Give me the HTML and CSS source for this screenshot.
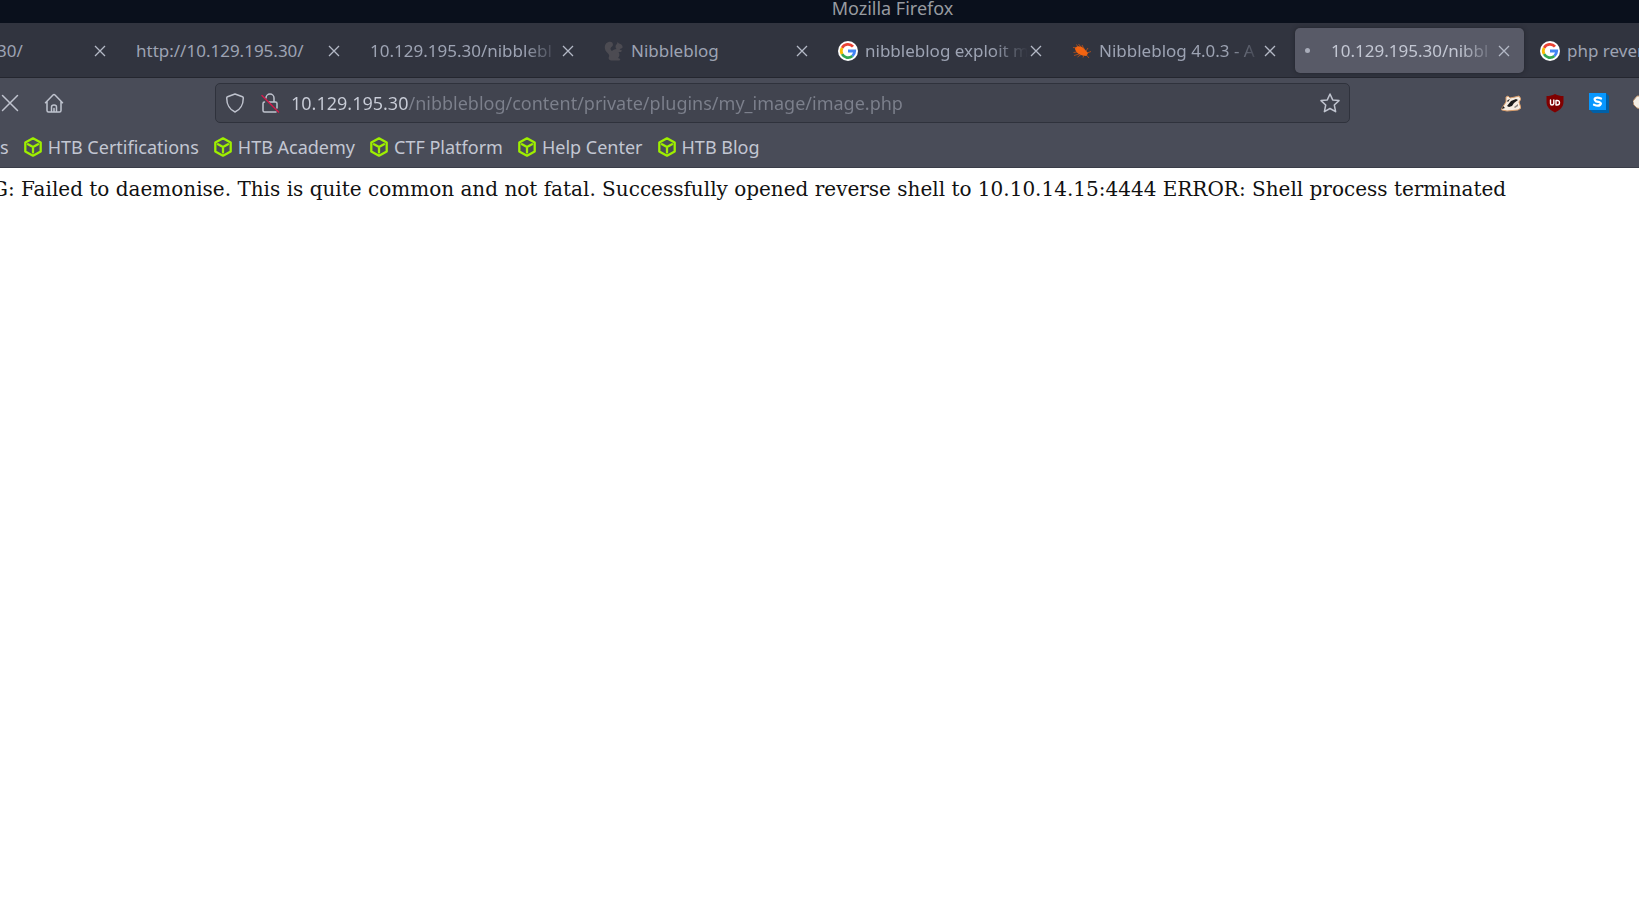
FILE: index.html
```html
<!DOCTYPE html>
<html lang="en">
<head>
<meta charset="utf-8">
<title>Mozilla Firefox</title>
<link rel="stylesheet" href="styles.css">
</head>
<body>
<svg class="defs" width="0" height="0" aria-hidden="true">
  <symbol id="close" viewBox="0 0 12 12"><path d="M1 1l10 10M11 1L1 11" fill="none" stroke="currentColor" stroke-width="1.3"/></symbol>
  <symbol id="google" viewBox="0 0 20 20">
    <circle cx="10" cy="10" r="10" fill="#fff"/>
    <g fill="none" stroke-width="2.8">
      <path d="M15 5.6A6.7 6.7 0 0 0 4.1 6.8" stroke="#ea4335"/>
      <path d="M4.1 6.8A6.7 6.7 0 0 0 4.1 13.2" stroke="#fbbc05"/>
      <path d="M4.1 13.2A6.7 6.7 0 0 0 14.4 15" stroke="#34a853"/>
      <path d="M14.4 15A6.7 6.7 0 0 0 16.7 10H10" stroke="#4285f4"/>
    </g>
  </symbol>
  <symbol id="cube" viewBox="0 0 18 20"><path d="M9 1.3L16.7 5.6V14.4L9 18.7L1.3 14.4V5.6ZM4 7.2L9 10L14 7.2M9 10V15.5" fill="none" stroke="#9fef00" stroke-width="2.3" stroke-linejoin="round" stroke-linecap="round"/></symbol>
</svg>
<header class="browser">
  <div class="titlebar">Mozilla Firefox</div>
  <nav class="tabs" aria-label="Tabs">
    <div class="tab tab-cut"><span class="tab-label">30/</span><button class="tab-close" aria-label="Close tab"><svg><use href="#close"/></svg></button></div>
    <div class="tab"><span class="tab-label">http://10.129.195.30/</span><button class="tab-close" aria-label="Close tab"><svg><use href="#close"/></svg></button></div>
    <div class="tab"><span class="tab-label fade">10.129.195.30/nibblebl</span><button class="tab-close" aria-label="Close tab"><svg><use href="#close"/></svg></button></div>
    <div class="tab">
      <svg class="favicon" viewBox="0 0 20 20" fill="#4c4b52"><path d="M7 19.500C4 19 4.500 16.500 5 15.500C6 13.500 3 12 1.500 9.500C-.5 5 2 .8 6 .8C9.500 1 9.800 4.500 7.400 6C5.800 7.500 6.500 9 8 10C9 8.500 10.500 8.500 12.500 8C11 6.500 11.300 4 13 3L13.500 1L15 2.500C17.500 3 19 5 18.500 6.500C18 7.700 16 7.500 15.500 8.500L18 9.500L17 11L14.500 11C16 13 15.500 15.500 14 17L16.500 18L15.500 19.500Z"/></svg>
      <span class="tab-label">Nibbleblog</span><button class="tab-close" aria-label="Close tab"><svg><use href="#close"/></svg></button></div>
    <div class="tab"><svg class="favicon"><use href="#google"/></svg><span class="tab-label fade">nibbleblog exploit m</span><button class="tab-close" aria-label="Close tab"><svg><use href="#close"/></svg></button></div>
    <div class="tab">
      <svg class="favicon" viewBox="0 0 20 20"><path d="M3 7C5 4.500 9 5 12 7.500L16 12L14.500 15C9 15 3 12 3 7Z" fill="#f26411"/><path d="M1 6.500L5 7M6 6L4.500 3.500M9 6L6.500 3M12 8L10 4M14 10L16 7M15 12L19 10.500M5 11L1.500 11.500M7 13L2 14.500M9 13.500L5.500 16M12 14L11 16.500M14 13.500L17 17" fill="none" stroke="#d65913" stroke-width="1" opacity=".7"/></svg>
      <span class="tab-label fade">Nibbleblog 4.0.3 - A</span><button class="tab-close" aria-label="Close tab"><svg><use href="#close"/></svg></button></div>
    <div class="tab active"><span class="throbber"></span><span class="tab-label fade">10.129.195.30/nibbl</span><button class="tab-close" aria-label="Close tab"><svg><use href="#close"/></svg></button></div>
    <div class="tab tab-last"><svg class="favicon"><use href="#google"/></svg><span class="tab-label">php rever</span></div>
  </nav>
  <div class="toolbar">
    <div class="nav-buttons">
      <button class="icon-button" aria-label="Stop"><svg width="20" height="20" viewBox="0 0 20 20"><path d="M2.500 2.500L17.500 17.500M17.500 2.500L2.500 17.500"/></svg></button>
      <button class="icon-button" aria-label="Home"><svg width="20" height="20" viewBox="0 0 20 20"><path d="M1.500 9.800L9 2Q10 1 11 2L18.500 9.800M3 8.500V17.500Q3 19 4.500 19H15.500Q17 19 17 17.500V8.500M7.500 19V14Q7.500 12 10 12T12.500 14V19M10 15.500V19"/></svg></button>
    </div>
    <div class="urlbar">
      <svg width="20" height="20" viewBox="0 0 20 20" aria-hidden="true"><path d="M10 1L17.500 3.800Q18.300 4.100 18.300 5C18.300 11.500 15 17 10 19C5 17 1.700 11.500 1.700 5Q1.700 4.100 2.500 3.800Z"/></svg>
      <svg width="20" height="20" viewBox="0 0 20 20" aria-hidden="true"><path d="M6 5a4 4 0 0 1 8 0V9M9 9H15.500Q17 9 17 10.500V15M16 19H4.500Q3 19 3 17.500V10.500Q3 9 4.500 9"/><path class="slash" d="M2 2.500L18.500 19"/></svg>
      <input class="url" type="text" aria-label="Address" value="10.129.195.30/nibbleblog/content/private/plugins/my_image/image.php">
      <button class="icon-button" aria-label="Bookmark this page"><svg width="20" height="20" viewBox="0 0 20 20"><path d="M10 1L12.700 6.900L19 7.600L14.300 12L15.600 18.700L10 15.500L4.400 18.700L5.700 12L1 7.600L7.300 6.900Z"/></svg></button>
    </div>
    <div class="extensions">
      <button class="ext" aria-label="Privacy Badger"><svg viewBox="0 0 20 20"><path d="M1 15L5 9L5 4L7 3L9 5L14 4L18 3L20 6L18 9L20 15L17 17L6 18L1 17Z" fill="#f6ece1" stroke="#d59a68" stroke-width="1"/><path d="M1 16L2 13L4 15ZM6 13L10 8L15 6L17 7L13 10L11 13L8 14ZM6 8L7 7L9 6L7 9Z" fill="#1b1b1b"/><path d="M13 14L17 11L17 13L14 15Z" fill="#8a8580"/></svg></button>
      <button class="ext" aria-label="uBlock Origin"><svg viewBox="0 0 20 20"><path d="M10 1C13 2.500 15 3 18.500 3V9C18.500 14 15 17 10 19.500C5 17 1.500 14 1.500 9V3C5 3 7 2.500 10 1Z" fill="#800000"/><path d="M5.500 7V10.500Q5.500 12 7 12T8.800 10.500V7M11 7.500V12H12Q14.500 12 14.500 9.700T12 7.500Z" fill="none" stroke="#fff" stroke-width="1.400"/></svg></button>
      <button class="ext" aria-label="Extension"><svg viewBox="0 0 20 20"><path d="M1 17L4 20H20V3L17 0Z" fill="#0060a8"/><path d="M0 0H17V17H0Z" fill="#0797ff"/><path d="M12 5.500Q8.500 4 6.500 5T7 8.300L10.500 9.200Q13 10.500 11 12T5 11.700" fill="none" stroke="#fff" stroke-width="2.300"/></svg></button>
      <button class="ext" aria-label="Extension"><svg viewBox="0 0 20 20"><path d="M0 8L4 3L12 3L19 9L12 17L4 15L1 12Z" fill="#f3eee5" stroke="#b8906c" stroke-width="1"/></svg></button>
    </div>
  </div>
  <nav class="bookmarks" aria-label="Bookmarks">
    <a href="#">s</a>
    <a href="#"><svg><use href="#cube"/></svg>HTB Certifications</a>
    <a href="#"><svg><use href="#cube"/></svg>HTB Academy</a>
    <a href="#"><svg><use href="#cube"/></svg>CTF Platform</a>
    <a href="#"><svg><use href="#cube"/></svg>Help Center</a>
    <a href="#"><svg><use href="#cube"/></svg>HTB Blog</a>
  </nav>
</header>
<main class="page">G: Failed to daemonise. This is quite common and not fatal. Successfully opened reverse shell to 10.10.14.15:4444 ERROR: Shell process terminated</main>
</body>
</html>
```
FILE: styles.css
```css
* { box-sizing: border-box; }
body {
  margin: 0;
  min-height: 100vh;
  background: #fff;
  overflow-x: hidden;
}
.defs { position: absolute; }
button { border: 0; padding: 0; background: none; color: inherit; display: flex; align-items: center; justify-content: center; }
.browser {
  background: #494c58;
  color: #c3c7d3;
  font: 18px/24px "Noto Sans", sans-serif;
  overflow: hidden;
  border-bottom: 1px solid #3a3d48;
}
.titlebar {
  height: 23px;
  padding-left: 146px;
  background: #0a101c;
  color: #989ba0;
  line-height: 16px;
  text-align: center;
}
.tabs {
  display: flex;
  gap: 5px;
  height: 55px;
  padding: 5px 0 4px;
  background: #31343f;
  border-bottom: 1px solid #24262f;
  color: #9da3b3;
  font-size: 17px;
  overflow: hidden;
}
.tab {
  flex: 0 0 229px;
  min-width: 0;
  display: flex;
  align-items: center;
  gap: 7px;
  padding: 0 14px 0 11px;
  border-radius: 5px;
}
.tab-cut { flex-basis: 123px; padding-left: 0; margin-left: -3px; }
.tab-last { flex: 1; padding-right: 0; }
.tab-label { flex: 1; min-width: 0; white-space: nowrap; overflow: hidden; }
.fade { mask-image: linear-gradient(to left, transparent, #000 36px); }
.tab-close { flex: none; width: 12px; height: 12px; color: #b4b9c6; margin-left: -5px; }
.tab-close svg { width: 12px; height: 12px; }
.favicon { flex: none; width: 20px; height: 20px; }
.active { background: #585a67; color: #c3c7d3; box-shadow: 0 0 4px #22242c; }
.throbber { flex: none; width: 5px; height: 5px; margin: 0 14px 0 -1px; border-radius: 50%; background: #a9adba; }
.toolbar {
  display: flex;
  align-items: center;
  height: 49px;
  padding-top: 1px;
}
.toolbar svg { fill: none; stroke: #bfc3ce; stroke-width: 1.5; stroke-linejoin: round; stroke-linecap: round; }
.nav-buttons { display: flex; gap: 24px; width: 215px; flex: none; }
.urlbar {
  flex: 1;
  display: flex;
  align-items: center;
  gap: 15px;
  height: 40px;
  padding: 0 9px;
  background: #41444f;
  border: 1px solid #2f323c;
  border-radius: 5px;
}
.urlbar .slash { stroke: #d11c4c; }
.url {
  flex: 1;
  min-width: 0;
  margin-left: -4px;
  padding: 0;
  border: 0;
  font: inherit;
  color: #c9cdd8;
  background: linear-gradient(to right, #c9cdd8 118px, #7c808c 118px);
  background-clip: text;
  -webkit-text-fill-color: transparent;
}
.extensions { flex: 0 0 289px; display: flex; gap: 24px; padding-left: 151px; overflow: hidden; }
.ext { flex: none; width: 20px; height: 20px; }
.toolbar .ext svg { width: 20px; height: 20px; stroke-width: 0; }
.bookmarks { display: flex; gap: 15px; height: 40px; align-items: center; }
.bookmarks a { display: flex; align-items: center; gap: 6px; color: inherit; text-decoration: none; white-space: nowrap; }
.bookmarks svg { width: 18px; height: 20px; }
.page {
  padding: 9px 0;
  margin-left: -8px;
  color: #111;
  font: 20px/24px "DejaVu Serif", serif;
  white-space: nowrap;
}
```
